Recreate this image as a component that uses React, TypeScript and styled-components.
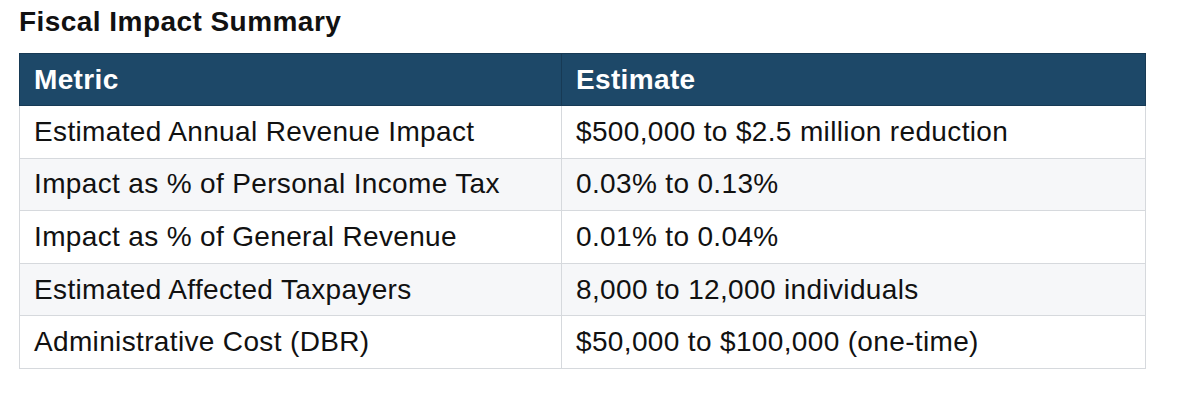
import type { FC } from "react";
import styled, { createGlobalStyle } from "styled-components";

const GlobalStyle = createGlobalStyle`
  html, body {
    margin: 0;
    padding: 0;
    background: #ffffff;
  }
  body {
    font-family: "Liberation Sans", Arial, Helvetica, sans-serif;
    color: #111111;
  }
`;

const Page = styled.div`
  width: 1200px;
  height: 415px;
  box-sizing: border-box;
  padding: 6px 0 0 19px;
  background: #ffffff;
`;

const Title = styled.h2`
  margin: 0 0 15px;
  height: 32px;
  line-height: 32px;
  font-size: 28px;
  font-weight: 700;
  letter-spacing: 0.45px;
  color: #111111;
`;

const Table = styled.table`
  width: 1127px;
  border-collapse: collapse;
  table-layout: fixed;
  font-size: 28px;
  letter-spacing: 0.35px;
`;

const HeadCell = styled.th`
  height: 52px;
  box-sizing: border-box;
  padding: 0 14px;
  text-align: left;
  font-weight: 700;
  color: #ffffff;
  background: #1d4868;
  border: 1px solid #173a55;
`;

const Row = styled.tr<{ $striped: boolean }>`
  background: ${(p) => (p.$striped ? "#f6f7f9" : "#ffffff")};
`;

const Cell = styled.td`
  height: 52.6px;
  box-sizing: border-box;
  padding: 0 14px;
  font-weight: 400;
  color: #111111;
  border: 1px solid #d6d9dd;
  white-space: nowrap;
`;

const rows: [string, string][] = [
  ["Estimated Annual Revenue Impact", "$500,000 to $2.5 million reduction"],
  ["Impact as % of Personal Income Tax", "0.03% to 0.13%"],
  ["Impact as % of General Revenue", "0.01% to 0.04%"],
  ["Estimated Affected Taxpayers", "8,000 to 12,000 individuals"],
  ["Administrative Cost (DBR)", "$50,000 to $100,000 (one-time)"],
];

const App: FC = () => {
  return (
    <>
      <GlobalStyle />
      <Page>
        <Title>Fiscal Impact Summary</Title>
        <Table>
          <colgroup>
            <col style={{ width: 542 }} />
            <col />
          </colgroup>
          <thead>
            <tr>
              <HeadCell>Metric</HeadCell>
              <HeadCell>Estimate</HeadCell>
            </tr>
          </thead>
          <tbody>
            {rows.map(([metric, estimate], i) => (
              <Row key={metric} $striped={i % 2 === 1}>
                <Cell>{metric}</Cell>
                <Cell>{estimate}</Cell>
              </Row>
            ))}
          </tbody>
        </Table>
      </Page>
    </>
  );
};

export default App;
